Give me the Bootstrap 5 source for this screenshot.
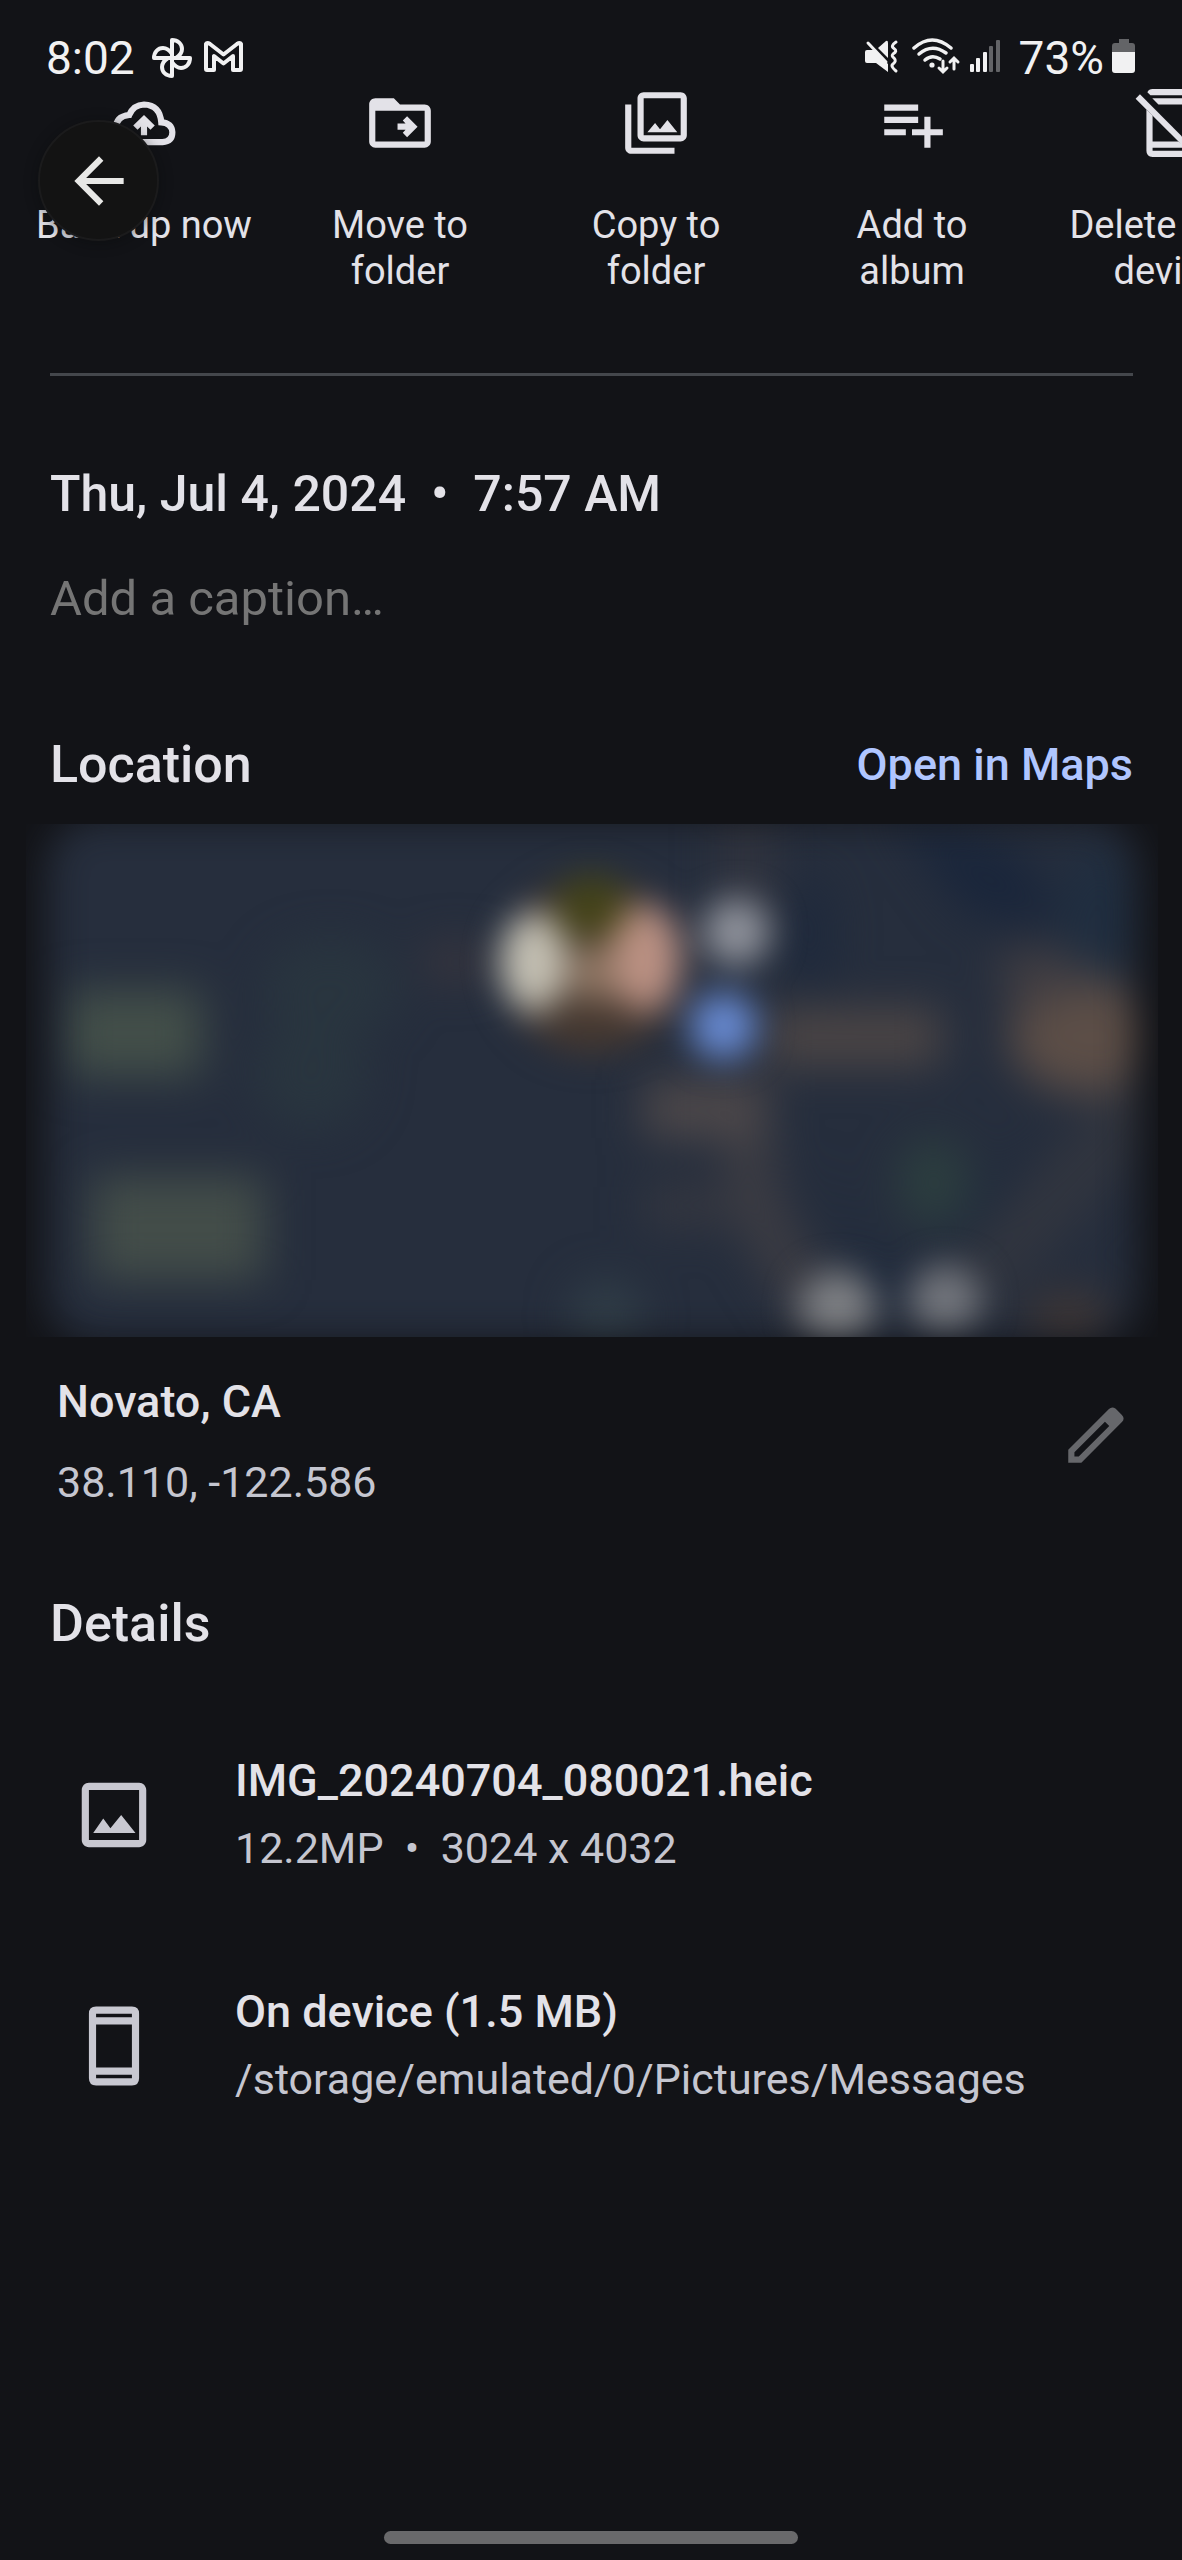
<!DOCTYPE html>
<html lang="en">
<head>
<meta charset="utf-8">
<meta name="viewport" content="width=device-width, initial-scale=1">
<title>Photo details</title>
<link href="https://cdn.jsdelivr.net/npm/bootstrap@5.3.0/dist/css/bootstrap.min.css" rel="stylesheet">
<style>
  body { background: #121317; color: #e3e2e8; font-family: Roboto, "Liberation Sans", sans-serif; }
  .screen { overflow: hidden; }
  .status-bar { padding: 33px 46px 0 46px; height: 86px; font-size: 46px; line-height: 50px; color: #f1f1f2; }
  .back-btn { position: absolute; left: 38px; top: 120px; width: 121px; height: 121px; background: #131313; border: 2px solid #1b1b1c; color: #e8e8e6; box-shadow: 0 2px 14px rgba(8, 10, 12, .45); z-index: 2; }
  .ico { width: 74px; height: 74px; fill: currentColor; display: block; flex: none; }
  .ico-lg { width: 86px; height: 86px; fill: currentColor; display: block; flex: none; }
  .action-row { padding-left: 16px; min-height: 208px; }
  .action { flex: 0 0 256px; background: none; border: 0; color: inherit; font-size: 38px; line-height: 46px; gap: 42px; padding: 0 20px; }
  .action.wide { padding: 0; }
  .gutter { padding-left: 50px; padding-right: 49px; }
  .rule { height: 3px; background: #44474c; margin-top: 79px; }
  .heading { font-size: 52px; line-height: 60px; font-weight: 500; margin: 0; }
  .heading.date { font-size: 50px; margin-top: 88px; }
  .caption-input { background: none; border: 0; outline: 0; padding: 0; font-size: 49px; line-height: 60px; height: 60px; margin-top: 45px; color: #e3e2e8; }
  .caption-input::placeholder { color: #757575; opacity: 1; }
  .location-head { margin-top: 106px; margin-bottom: 29px; }
  .maps-link { color: #b0c6ff; font-size: 45px; line-height: 60px; font-weight: 500; text-decoration: none; }
  .map { display: block; margin: 0 24px 0 26px; height: 513px; }
  .place { padding-left: 57px; padding-right: 49px; margin-top: 35px; margin-bottom: 82px; }
  .line-main { font-size: 45px; line-height: 60px; font-weight: 500; }
  .line-sub { font-size: 43px; line-height: 60px; color: #c5c6d0; }
  .edit-btn { background: none; border: 0; padding: 0; margin-top: 26px; color: #66676b; }
  .place-text { gap: 20px; }
  .info-list { padding-left: 71px; gap: 104px; margin: 97px 0 0; }
  .info-item { gap: 78px; }
  .info-text { gap: 7px; }
  .info-icon { color: #c8c8d1; }
  .home-bar { width: 35%; height: 13px; border-radius: 7px; background: #69696b; margin: auto auto 16px; }
</style>
<script src="https://cdn.jsdelivr.net/npm/bootstrap@5.3.0/dist/js/bootstrap.bundle.min.js"></script>
</head>
<body>
<div class="screen position-relative d-flex flex-column min-vh-100">

  <header class="status-bar d-flex justify-content-between">
    <div class="d-flex align-items-start">
      <span>8:02</span>
      <svg class="ms-3" width="96" height="46" viewBox="0 0 96 44" fill="none" stroke="#f1f1f2" stroke-width="4" stroke-linejoin="round" aria-hidden="true">
        <g>
          <path d="M21 24V6C27 6 31 10 31 15C31 19 28 22 25 24"/>
          <path d="M21 24H39C39 30 35 34 30 34C26 34 23 31 21 28"/>
          <path d="M21 24V42C15 42 11 38 11 33C11 29 14 26 17 24"/>
          <path d="M21 24H3C3 18 7 14 12 14C16 14 19 17 21 20"/>
        </g>
        <path stroke-width="4" d="M55 35V10Q56 8 59 10L72.500 20.500L86 10Q89 8 90 10V35Q90 36 89 36H82V22L72.500 29.500L63 22V36H56Q55 36 55 35Z"/>
      </svg>
    </div>
    <div class="d-flex align-items-start">
      <svg class="me-3" width="138" height="44" viewBox="0 0 138 44" aria-hidden="true">
        <g fill="#f1f1f2">
          <path d="M0 19Q0 17 2 17H9L23 31V39L11 30H2Q0 30 0 28Z"/>
          <path d="M13 15L21 8Q23 7 23 10V25Z"/>
        </g>
        <g fill="none" stroke="#f1f1f2" stroke-linecap="round" stroke-width="3">
          <path d="M3 10L21 29"/>
          <path d="M31 9Q25 13 29 15.500Q33 18 28 21Q26 23 29 25Q32 28 28 31Q25 33 31 38" stroke-width="3"/>
        </g>
        <g fill="none" stroke="#f1f1f2" stroke-linecap="round" stroke-width="3.500">
          <path d="M49 15Q67 -1 86 15"/><path d="M54 21Q67 10 81 20"/><path d="M60 27Q67 21 75 26"/>
          <path d="M78 28V38M74 35L78 39L82 35" stroke-width="3"/>
          <path d="M89 36V26M85 29L89 25L93 29" stroke-width="3"/>
        </g>
        <circle cx="67" cy="32" r="2.600" fill="#f1f1f2"/>
        <g fill="#f1f1f2"><rect x="105" y="31" width="4" height="8" rx="1"/><rect x="111" y="25" width="4" height="14" rx="1"/><rect x="118" y="19" width="4" height="20" rx="1"/></g>
        <g fill="#636467"><rect x="124" y="13" width="4" height="26" rx="1"/><rect x="131" y="7" width="4" height="32" rx="1"/></g>
      </svg>
      <span>73%</span>
      <svg class="ms-2" width="24" height="42" viewBox="0 0 24 42" aria-hidden="true">
        <path fill="#636467" d="M7 6H17V10H20Q23 10 23 13V19H0V13Q0 10 3 10H7Z"/>
        <path fill="#f1f1f2" d="M0 19H23V37Q23 40 20 40H3Q0 40 0 37Z"/>
      </svg>
    </div>
  </header>

  <button type="button" class="back-btn rounded-circle d-flex align-items-center justify-content-center p-0" aria-label="Back">
    <svg class="ico" viewBox="0 0 24 24"><path d="M20 11H7.830l5.590-5.590L12 4l-8 8 8 8 1.410-1.410L7.830 13H20v-2z"/></svg>
  </button>

  <nav class="action-row d-flex flex-nowrap align-items-start overflow-hidden" aria-label="Photo actions">
    <button type="button" class="action wide d-flex flex-column align-items-center">
      <svg class="ico" viewBox="0 0 24 24"><path fill="none" stroke="currentColor" stroke-width="2" d="M6.800 18.200H18Q21.200 18 21.200 15Q21 12 17.600 11.800Q17.200 6.200 12 6Q8.600 6.100 7.200 9.400Q2.800 9.800 2.800 14Q3 18 6.800 18.200Z"/><path d="M11 16v-2.900l-1.100 1.100-1.400-1.400 3.500-3.400 3.500 3.400-1.400 1.400-1.100-1.100v2.900z"/></svg>
      <span>Back up now</span>
    </button>
    <button type="button" class="action d-flex flex-column align-items-center">
      <svg class="ico" viewBox="0 0 24 24"><path d="M20 6h-8l-2-2H4c-1.100 0-2 .900-2 2v12c0 1.100.900 2 2 2h16c1.100 0 2-.900 2-2V8c0-1.100-.900-2-2-2zm0 12H4V8h16v10z"/><path d="M11.200 12.200h2.600l-.900-1 1.400-1.400 3.400 3.400-3.400 3.400-1.400-1.400.9-1h-2.600z"/></svg>
      <span>Move to folder</span>
    </button>
    <button type="button" class="action d-flex flex-column align-items-center">
      <svg class="ico" viewBox="0 0 24 24"><path d="M20 4v12H8V4h12m0-2H8c-1.100 0-2 .900-2 2v12c0 1.100.900 2 2 2h12c1.100 0 2-.900 2-2V4c0-1.100-.900-2-2-2zM9.200 15l2.500-3 1.600 2 2.400-3 3.200 4zM2 6v14c0 1.100.900 2 2 2h14v-2H4V6H2z"/></svg>
      <span>Copy to folder</span>
    </button>
    <button type="button" class="action d-flex flex-column align-items-center">
      <svg class="ico" viewBox="0 0 24 24"><path d="M14 10H3v2h11v-2zm0-4H3v2h11V6zm4 8v-4h-2v4h-4v2h4v4h2v-4h4v-2h-4zM3 16h7v-2H3v2z"/></svg>
      <span>Add to album</span>
    </button>
    <button type="button" class="action d-flex flex-column align-items-center">
      <svg class="ico" viewBox="0 0 24 24"><path d="M5.300 2Q5.800 1 7 1H17Q19 1 19 3V16.200L17 14.200V6H8.900L6.900 4H17V3H6.300ZM5 7.600L7 9.600V18H15.400L22.300 22.900L20.900 24.300L19 22.300Q18.500 23 17 23H7Q5 23 5 21ZM7 20V21H17V20Z"/><path d="M1.500 4.100L2.900 2.700L22.300 22.100L20.900 23.500Z"/></svg>
      <span>Delete from device</span>
    </button>
  </nav>

  <main>
    <section class="gutter">
      <div class="rule"></div>
      <h1 class="heading date">Thu, Jul 4, 2024 &nbsp;•&nbsp; 7:57 AM</h1>
      <input type="text" class="caption-input d-block w-100" placeholder="Add a caption…" aria-label="Add a caption">
      <div class="location-head d-flex justify-content-between align-items-center">
        <h2 class="heading">Location</h2>
        <a href="#" class="maps-link">Open in Maps</a>
      </div>
    </section>

    <div class="map">
      <svg width="100%" height="100%" viewBox="0 0 1133 513" preserveAspectRatio="none" role="img" aria-label="Map of the photo location">
        <defs>
          <filter id="soft" filterUnits="userSpaceOnUse" x="-80" y="-80" width="1293" height="673" color-interpolation-filters="sRGB"><feGaussianBlur stdDeviation="22"/></filter>
          <filter id="dots" filterUnits="userSpaceOnUse" x="-80" y="-80" width="1293" height="673" color-interpolation-filters="sRGB"><feGaussianBlur stdDeviation="17"/></filter>
          <filter id="edge" filterUnits="userSpaceOnUse" x="-80" y="-80" width="1293" height="673" color-interpolation-filters="sRGB"><feGaussianBlur stdDeviation="20"/></filter>
          <mask id="fade" maskUnits="userSpaceOnUse" x="0" y="0" width="1133" height="513"><rect x="20" y="-6" width="1093" height="525" rx="50" fill="#fff" filter="url(#edge)"/></mask>
        </defs>
        <g mask="url(#fade)">
          <rect width="1133" height="513" fill="#262e3d"/>
          <g filter="url(#soft)">
            <path d="M860 -20L1000 30L1040 110L940 90Z" fill="#1a263b"/>
            <ellipse cx="1075" cy="90" rx="40" ry="70" fill="#202e40"/>
            <ellipse cx="785" cy="110" rx="22" ry="60" fill="#1e293c"/>
            <path d="M790 330L850 440L900 450L960 370L1020 300L930 440L850 470Z" fill="#1a283c"/>
            <ellipse cx="305" cy="165" rx="68" ry="50" fill="#29353f"/>
            <ellipse cx="285" cy="250" rx="56" ry="55" fill="#29353f"/>
            <rect x="40" y="166" width="136" height="86" fill="#434f49"/>
            <rect x="66" y="352" width="172" height="104" fill="#434d49"/>
            <rect x="400" y="120" width="60" height="36" fill="#39363e"/>
            <path d="M722 -20V100" stroke="#31343f" stroke-width="54"/>
            <path d="M722 300Q722 390 770 450L800 500" stroke="#3c3c43" stroke-width="50" fill="none"/>
            <path d="M1130 270L1000 405L920 480" stroke="#31353f" stroke-width="64" fill="none"/>
            <rect x="740" y="184" width="176" height="58" fill="#4b4545"/>
            <ellipse cx="1062" cy="212" rx="78" ry="58" fill="#5c4e47"/>
            <ellipse cx="1015" cy="150" rx="44" ry="28" fill="#403d42"/>
            <rect x="618" y="256" width="124" height="58" fill="#4d484a"/>
            <rect x="620" y="362" width="90" height="40" fill="#353740"/>
            <ellipse cx="908" cy="358" rx="36" ry="44" fill="#2c3e3f"/>
            <ellipse cx="1044" cy="495" rx="44" ry="26" fill="#403735"/>
            <circle cx="581" cy="492" r="36" fill="#313e48"/>
          </g>
          <g filter="url(#dots)">
            <circle cx="566" cy="142" r="88" fill="#453830"/>
            <ellipse cx="508" cy="138" rx="34" ry="50" fill="#c4c0b3"/>
            <ellipse cx="620" cy="134" rx="36" ry="54" fill="#bb9183"/>
            <ellipse cx="568" cy="150" rx="24" ry="30" fill="#8d7461"/>
            <ellipse cx="566" cy="82" rx="36" ry="32" fill="#444318"/>
            <circle cx="711" cy="108" r="34" fill="#8f929b"/>
            <circle cx="698" cy="202" r="34" fill="#6789d0"/>
            <circle cx="812" cy="485" r="38" fill="#7e8084"/>
            <circle cx="920" cy="477" r="36" fill="#72757c"/>
          </g>
        </g>
      </svg>
    </div>

    <section class="place d-flex justify-content-between align-items-start">
      <div class="place-text d-flex flex-column">
        <div class="line-main">Novato, CA</div>
        <div class="line-sub">38.110, -122.586</div>
      </div>
      <button type="button" class="edit-btn" aria-label="Edit location">
        <svg class="ico" viewBox="0 0 24 24"><path fill-rule="evenodd" d="M3 21v-4.250L16.200 3.570Q17.200 2.600 18.400 3.500L20.400 5.500Q21.500 6.700 20.400 7.800L7.250 21zM5 19h1.400L16.300 9.100L14.900 7.700L5 17.600z"/></svg>
      </button>
    </section>

    <section>
      <h2 class="heading gutter">Details</h2>
      <ul class="info-list list-unstyled d-flex flex-column">
        <li class="info-item d-flex align-items-center">
          <svg class="ico-lg info-icon" viewBox="0 0 24 24" aria-hidden="true"><path d="M19 5v14H5V5h14m0-2H5c-1.100 0-2 .900-2 2v14c0 1.100.900 2 2 2h14c1.100 0 2-.900 2-2V5c0-1.100-.900-2-2-2zM6.200 17l2.800-4 2 2.700 3-3.700 4 5z"/></svg>
          <div class="info-text d-flex flex-column">
            <div class="line-main">IMG_20240704_080021.heic</div>
            <div class="line-sub">12.2MP &nbsp;•&nbsp; 3024 x 4032</div>
          </div>
        </li>
        <li class="info-item d-flex align-items-center">
          <svg class="ico-lg info-icon" viewBox="0 0 24 24" aria-hidden="true"><path fill-rule="evenodd" d="M7 1h10q2 0 2 2v18q0 2-2 2H7q-2 0-2-2V3q0-2 2-2zM7 3v1h10V3zM7 6v12h10V6zM7 20v1h10v-1z"/></svg>
          <div class="info-text d-flex flex-column">
            <div class="line-main">On device (1.5 MB)</div>
            <div class="line-sub">/storage/emulated/0/Pictures/Messages</div>
          </div>
        </li>
      </ul>
    </section>
  </main>

  <div class="home-bar"></div>
</div>
</body>
</html>
